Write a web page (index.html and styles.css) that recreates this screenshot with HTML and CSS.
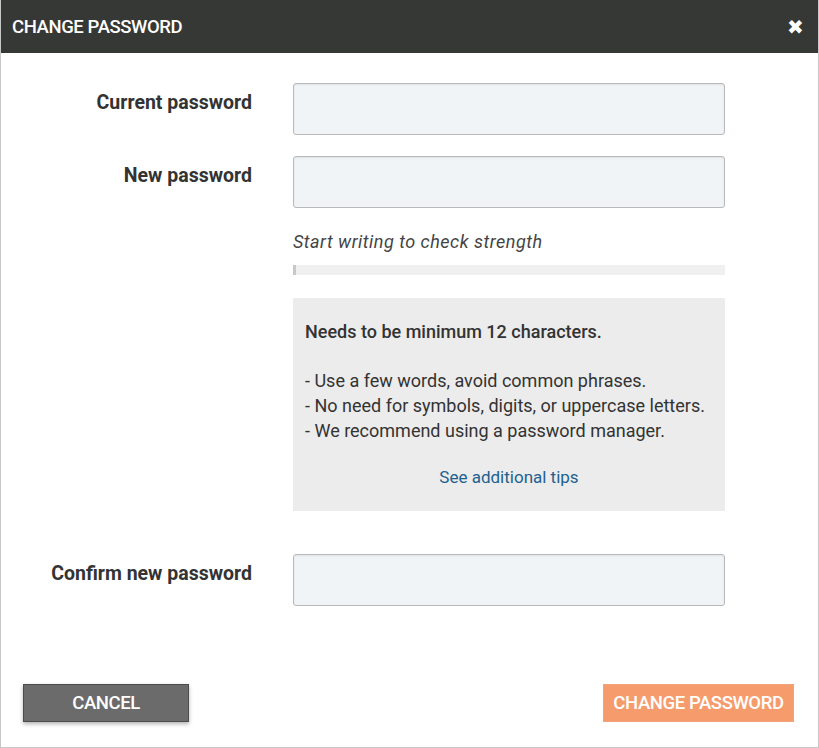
FILE: index.html
```html
<!DOCTYPE html>
<html lang="en">
<head>
    <meta charset="utf-8">
    <title>Change password</title>
    <link rel="stylesheet" href="styles.css">
</head>
<body>
    <div class="dialog">
        <div class="dialog-header">
            <h1 class="dialog-title">CHANGE PASSWORD</h1>
            <span class="dialog-close">&#10006;</span>
        </div>

        <div class="dialog-body">
            <div class="form-row">
                <label class="form-label" for="current">Current password</label>
                <div class="form-field">
                    <input type="password" id="current" class="form-control">
                </div>
            </div>

            <div class="form-row">
                <label class="form-label" for="new">New password</label>
                <div class="form-field">
                    <input type="password" id="new" class="form-control">
                    <p class="strength-hint">Start writing to check strength</p>
                    <div class="strength-bar"><div class="strength-fill"></div></div>
                    <div class="tips-box">
                        <p class="tips-title">Needs to be minimum 12 characters.</p>
                        <p class="tips-line">- Use a few words, avoid common phrases.</p>
                        <p class="tips-line">- No need for symbols, digits, or uppercase letters.</p>
                        <p class="tips-line">- We recommend using a password manager.</p>
                        <a class="tips-link" href="#">See additional tips</a>
                    </div>
                </div>
            </div>

            <div class="form-row form-row-confirm">
                <label class="form-label" for="confirm">Confirm new password</label>
                <div class="form-field">
                    <input type="password" id="confirm" class="form-control">
                </div>
            </div>
        </div>

        <div class="dialog-footer">
            <button class="btn btn-cancel">CANCEL</button>
            <button class="btn btn-primary">CHANGE PASSWORD</button>
        </div>
    </div>
</body>
</html>
```

FILE: styles.css
```css
* {
    box-sizing: border-box;
}

body {
    margin: 0;
    font-family: Roboto, "Liberation Sans", sans-serif;
    color: #333;
    background: #fff;
}

.dialog {
    width: 819px;
    height: 748px;
    border: 1px solid #c8c8c8;
    border-top: none;
    display: flex;
    flex-direction: column;
}

.dialog-header {
    height: 53px;
    background-color: #363835;
    display: flex;
    align-items: center;
    justify-content: space-between;
    padding: 0 14px 0 11px;
}

.dialog-title {
    margin: 0;
    color: #fff;
    font-size: 18.5px;
    font-weight: 500;
    letter-spacing: -0.4px;
}

.dialog-close {
    color: #fff;
    font-size: 20px;
    line-height: 1;
}

.dialog-body {
    flex: 1;
    padding-top: 30px;
}

.form-row {
    display: grid;
    grid-template-columns: 251px 432px;
    column-gap: 41px;
    margin-bottom: 21px;
}

.form-label {
    text-align: right;
    font-weight: 700;
    font-size: 19.5px;
    color: #333;
    padding-top: 8px;
}

.form-control {
    display: block;
    width: 100%;
    height: 52px;
    background-color: #f1f4f7;
    border: 1px solid #b9b9b9;
    border-radius: 3px;
    box-shadow: inset 0 1px 2px rgba(0,0,0,0.08);
}

.strength-hint {
    margin: 23px 0 0;
    font-style: italic;
    font-size: 18px;
    color: #444;
    letter-spacing: 0.5px;
}

.strength-bar {
    margin-top: 13px;
    height: 10px;
    background-color: #f0f0f0;
}

.strength-fill {
    width: 3px;
    height: 100%;
    background-color: #c8c8c8;
}

.tips-box {
    margin-top: 23px;
    background-color: #ececec;
    padding: 23px 12px 24px;
    font-size: 18px;
}

.tips-title {
    margin: 0 0 26px;
    font-weight: 500;
    color: #333;
}

.tips-line {
    margin: 0;
    line-height: 25px;
    color: #333;
}

.tips-link {
    display: block;
    margin-top: 24px;
    text-align: center;
    color: #22618f;
    text-decoration: none;
    font-size: 17px;
}

.form-row-confirm {
    margin-top: 43px;
}

.dialog-footer {
    display: flex;
    justify-content: space-between;
    padding: 0 24px 25px 22px;
}

.btn {
    height: 38px;
    font-family: Roboto, "Liberation Sans", sans-serif;
    font-size: 18.5px;
    font-weight: 500;
    color: #fff;
    letter-spacing: -0.4px;
    cursor: pointer;
}

.btn-cancel {
    width: 166px;
    background-color: #6b6b6b;
    border: 1px solid #4c4c4c;
    box-shadow: 0 2px 4px rgba(0,0,0,0.3);
}

.btn-primary {
    width: 191px;
    background-color: #f69b6c;
    border: 1px solid #f3a37b;
}
```
